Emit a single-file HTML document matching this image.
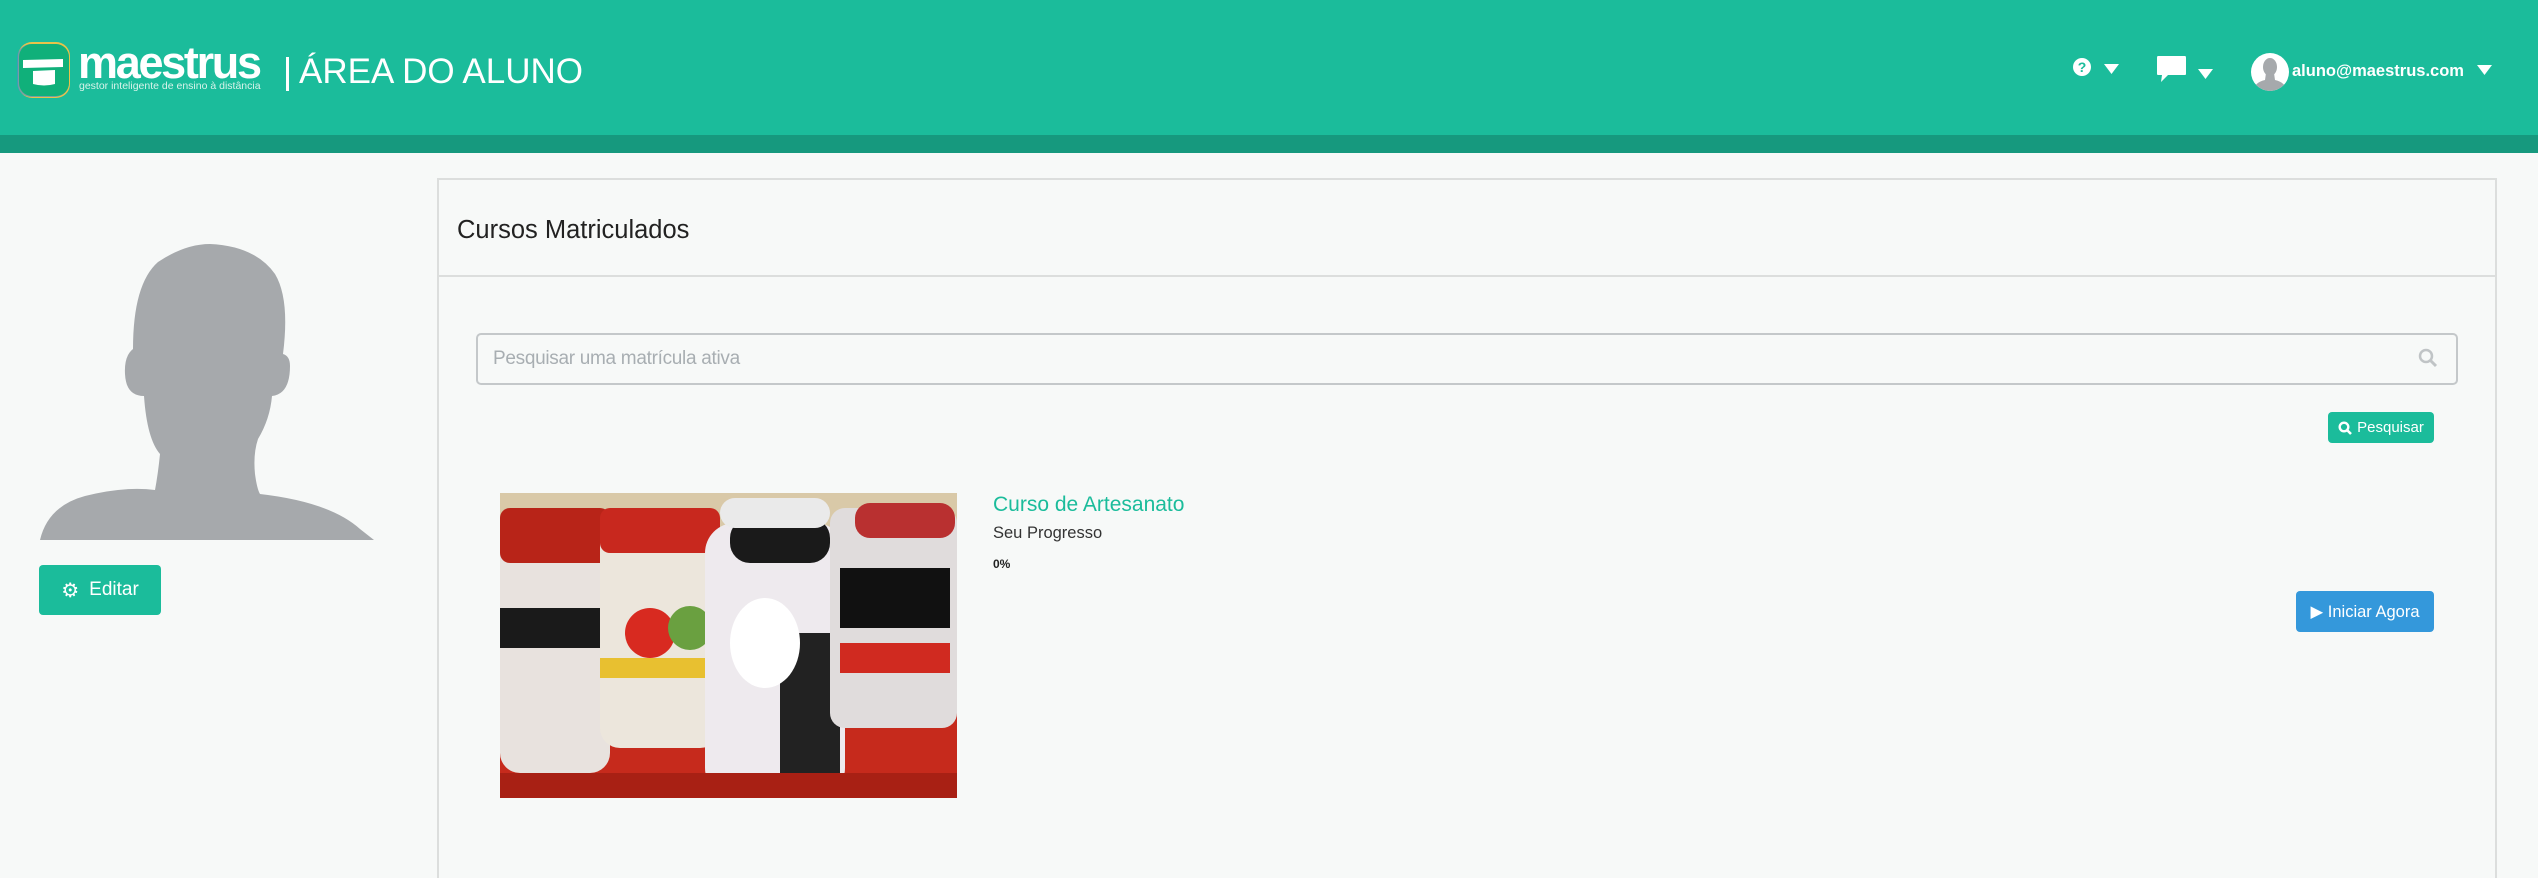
<!DOCTYPE html>
<html><head><meta charset="utf-8"><style>
*{margin:0;padding:0;box-sizing:border-box}
body{width:2538px;height:874px;overflow:hidden;background:#f7f9f8;font-family:"Liberation Sans",sans-serif;position:relative}
.a{position:absolute}
.hdr{left:0;top:0;width:2538px;height:135px;background:#1bbc9b}
.band{left:0;top:135px;width:2538px;height:18px;background:#16997e}
.btn{position:absolute;color:#fff;border-radius:4px;display:flex;align-items:center;justify-content:center}
</style></head><body>
<div class="a hdr"></div>
<div class="a band"></div>
<!-- logo -->
<svg class="a" style="left:15px;top:40px" width="58" height="60" viewBox="0 0 58 60">
<rect x="3" y="2" width="52" height="56" rx="14" fill="#e8c34a"/>
<rect x="2" y="4" width="52" height="53" rx="14" fill="#4a90c8" opacity=".7"/>
<rect x="4" y="4" width="50" height="52" rx="13" fill="#10b07a"/>
<path d="M8 20 L48 19 L48 27 L8 28 Z" fill="#fff"/>
<path d="M18 31 L40 30 L40 44 Q29 47 18 44 Z" fill="#fff"/>
</svg>
<div class="a" style="left:78px;top:40px;color:#fff;font-weight:bold;font-size:45px;letter-spacing:-2.3px;line-height:46px">maestrus</div>
<div class="a" style="left:79px;top:80px;color:#d8f3ea;font-size:10.5px;line-height:12px">gestor inteligente de ensino à distância</div>
<div class="a" style="left:286px;top:57px;width:3px;height:34px;background:#fff"></div>
<div class="a" style="left:299px;top:52px;color:#fff;font-size:35px;line-height:40px">ÁREA DO ALUNO</div>
<!-- right header -->
<div class="a" style="left:2073px;top:58px;width:18px;height:18px;border-radius:50%;background:#fff;color:#1bbc9b;font-weight:bold;font-size:14px;line-height:18px;text-align:center">?</div>
<svg class="a" style="left:2104px;top:64px" width="15" height="11"><path d="M0 0H15L7.5 10Z" fill="#fff"/></svg>
<svg class="a" style="left:2156px;top:55px" width="32" height="28"><path d="M2 1H29Q30 1 30 3V19Q30 20 29 20H12L5 27L6 20H2Q1 20 1 19V3Q1 1 2 1Z" fill="#fff"/></svg>
<svg class="a" style="left:2198px;top:69px" width="15" height="11"><path d="M0 0H15L7.5 10Z" fill="#fff"/></svg>
<svg class="a" style="left:2251px;top:53px" width="38" height="38" viewBox="0 0 38 38"><clipPath id="c"><circle cx="19" cy="19" r="19"/></clipPath><circle cx="19" cy="19" r="19" fill="#fff"/><g clip-path="url(#c)" fill="#a6a9ac"><ellipse cx="19" cy="14" rx="7" ry="9"/><path d="M15 20H23L24 27Q34 29 36 38H2Q4 29 14 27Z"/></g></svg>
<div class="a" style="left:2292px;top:60px;color:#fff;font-weight:bold;font-size:16.5px;line-height:22px">aluno@maestrus.com</div>
<svg class="a" style="left:2477px;top:65px" width="15" height="11"><path d="M0 0H15L7.5 10Z" fill="#fff"/></svg>
<!-- avatar -->
<svg class="a" style="left:40px;top:244px" width="334" height="296" viewBox="0 0 334 296"><path fill="#a6a9ac" d="M93 105Q93 40 118 18Q145 0 170 0Q215 2 235 30Q250 55 243 110Q250 112 250 122Q250 150 232 152Q230 175 218 195Q213 210 215 230Q217 245 220 250Q290 258 320 285L334 296H0Q8 262 45 252Q85 242 115 246Q118 230 120 210Q107 195 104 152Q86 152 85 130Q84 112 93 105Z"/></svg>
<div class="btn" style="left:39px;top:565px;width:122px;height:50px;background:#1bbc9b;font-size:19px"><span style="font-size:20px;margin-right:10px">⚙</span>Editar</div>
<!-- card -->
<div class="a" style="left:437px;top:178px;width:2060px;height:700px;border:2px solid #dcdedd;border-bottom:none;background:#f7f9f8"></div>
<div class="a" style="left:437px;top:275px;width:2060px;height:2px;background:#dcdedd"></div>
<div class="a" style="left:457px;top:214px;font-size:25.5px;color:#222;line-height:32px">Cursos Matriculados</div>
<div class="a" style="left:476px;top:333px;width:1982px;height:52px;border:2px solid #c4c8ca;border-radius:5px"></div>
<div class="a" style="left:493px;top:346px;font-size:19px;letter-spacing:-.3px;color:#a8aeb2;line-height:26px">Pesquisar uma matrícula ativa</div>
<svg class="a" style="left:2418px;top:348px" width="20" height="20"><circle cx="8" cy="8" r="6" fill="none" stroke="#c0c4c6" stroke-width="2.5"/><path d="M12.5 12.5L18 18" stroke="#c0c4c6" stroke-width="3"/></svg>
<div class="btn" style="left:2328px;top:412px;width:106px;height:31px;background:#1bbc9b;font-size:15px"><svg width="14" height="14" style="margin-right:5px"><circle cx="6" cy="6" r="4.3" fill="none" stroke="#fff" stroke-width="2.4"/><path d="M9 9L13 13" stroke="#fff" stroke-width="2.6"/></svg>Pesquisar</div>
<!-- image -->
<svg class="a" style="left:500px;top:493px" width="457" height="305" viewBox="0 0 457 305">
<rect width="457" height="305" fill="#c62a1c"/>
<rect y="0" width="457" height="60" fill="#d9c9a8"/>
<rect x="0" y="20" width="110" height="260" rx="20" fill="#e8e2de"/>
<rect x="0" y="15" width="110" height="55" rx="10" fill="#b82418"/>
<rect x="0" y="115" width="110" height="40" fill="#1a1a1a"/>
<rect x="100" y="25" width="120" height="230" rx="20" fill="#ece6dc"/>
<rect x="100" y="15" width="120" height="45" rx="10" fill="#c8281e"/>
<rect x="100" y="165" width="120" height="20" fill="#e8c030"/>
<circle cx="150" cy="140" r="25" fill="#d82a20"/>
<circle cx="190" cy="135" r="22" fill="#6aa040"/>
<rect x="205" y="30" width="140" height="275" rx="30" fill="#eeeaee"/>
<rect x="230" y="25" width="100" height="45" rx="20" fill="#1a1a1a"/>
<rect x="220" y="5" width="110" height="30" rx="15" fill="#eaeaea"/>
<rect x="280" y="140" width="60" height="150" fill="#222"/>
<ellipse cx="265" cy="150" rx="35" ry="45" fill="#fff"/>
<rect x="330" y="15" width="127" height="220" rx="15" fill="#e0dcdc"/>
<rect x="355" y="10" width="100" height="35" rx="15" fill="#b93030"/>
<rect x="340" y="75" width="110" height="60" fill="#111"/>
<rect x="340" y="150" width="110" height="30" fill="#d02a20"/>
<rect x="0" y="280" width="457" height="25" fill="#a82014"/>
</svg>
<div class="a" style="left:993px;top:492px;font-size:21px;color:#1bbc9b;line-height:26px">Curso de Artesanato</div>
<div class="a" style="left:993px;top:522px;font-size:16.5px;color:#333;line-height:22px">Seu Progresso</div>
<div class="a" style="left:993px;top:556px;font-size:12px;font-weight:bold;color:#222;line-height:16px">0%</div>
<div class="btn" style="left:2296px;top:591px;width:138px;height:41px;background:#3498db;font-size:16.5px">▶ Iniciar Agora</div>
</body></html>
